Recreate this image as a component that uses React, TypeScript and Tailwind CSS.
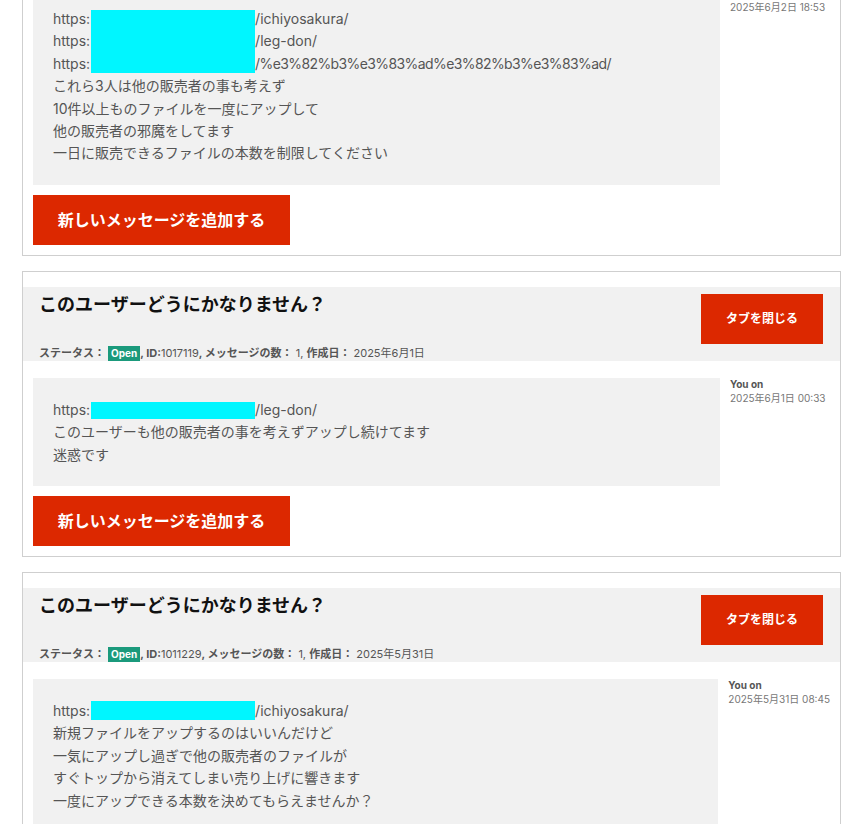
import React from "react";

const FONT = { fontFamily: "Inter, 'Noto Sans CJK JP', sans-serif" };

function Cyan({ cls }: { cls: string }) {
  return <span className={`ml-[1px] inline-block w-[164px] bg-[#00f6ff] ${cls}`} />;
}

type Line = React.ReactNode;

function Card({
  first,
  title,
  id,
  created,
  when,
  lines,
}: {
  first?: boolean;
  title: string;
  id: string;
  created: string;
  when: string;
  lines: Line[];
}) {
  return (
    <div
      className={`ml-[22px] w-[819px] border border-[#cfcfcf] bg-white pt-[15px] ${
        first ? "-mt-[120px]" : "mt-[15px]"
      }`}
    >
      <div className="flex h-[74px] justify-between bg-[#f1f1f1]">
        <div className="flex flex-col pl-[16px]">
          <div className="pt-[6px] text-[18px] font-bold leading-[24px] text-[#111]">{title}</div>
          <div className="mt-auto pb-[0px] text-[11px] leading-[16px] text-[#555]">
            <span className="font-bold">ステータス：</span>{" "}
            <span className="inline-block bg-[#1b9a7c] px-[3px] text-[10px] font-bold leading-[15px] text-white">
              Open
            </span>
            <span className="font-bold">, ID:</span>
            {id}
            <span className="font-bold">, メッセージの数：</span> 1,{" "}
            <span className="font-bold">作成日：</span> {created}
          </div>
        </div>
        <button className="mr-[17px] mt-[7px] h-[50px] w-[122px] bg-[#dc2800] text-[12px] font-bold text-white">
          タブを閉じる
        </button>
      </div>
      <div className="px-[10px] pb-[10px] pt-[17px]">
        <div className="flex">
          <div className="w-[687px] bg-[#f1f1f1] px-5 pb-[20px] pt-[21px] text-[14px] leading-[22.4px] text-[#555]">
            {lines.map((l, i) => (
              <div key={i}>{l}</div>
            ))}
          </div>
          <div className="-mt-[1px] ml-[10px] whitespace-nowrap text-[10px] leading-[14px]">
            <div className="font-bold text-[#555]">You on</div>
            <div className="text-[#777]">{when}</div>
          </div>
        </div>
        <button className="mt-[10px] h-[50px] w-[257px] bg-[#dc2800] text-[16px] font-bold text-white">
          新しいメッセージを追加する
        </button>
      </div>
    </div>
  );
}

export default function App() {
  return (
    <div className="min-h-screen overflow-hidden bg-white pb-10" style={FONT}>
      <Card
        first
        title="このユーザーどうにかなりません？"
        id="1017320"
        created="2025年6月2日"
        when="2025年6月2日 18:53"
        lines={[
          <>
            https:<Cyan cls="h-[20px] align-bottom" />/ichiyosakura/
          </>,
          <>
            https:<Cyan cls="h-[22.4px] align-top" />/leg-don/
          </>,
          <>
            https:<Cyan cls="h-[20px] align-top" />
            <span className="tracking-[-0.6px]">/%e3%82%b3%e3%83%ad%e3%82%b3%e3%83%ad/</span>
          </>,
          "これら3人は他の販売者の事も考えず",
          "10件以上ものファイルを一度にアップして",
          "他の販売者の邪魔をしてます",
          "一日に販売できるファイルの本数を制限してください",
        ]}
      />
      <Card
        title="このユーザーどうにかなりません？"
        id="1017119"
        created="2025年6月1日"
        when="2025年6月1日 00:33"
        lines={[
          <>
            https:<Cyan cls="h-[17px] align-[-4px]" />/leg-don/
          </>,
          "このユーザーも他の販売者の事を考えずアップし続けてます",
          "迷惑です",
        ]}
      />
      <Card
        title="このユーザーどうにかなりません？"
        id="1011229"
        created="2025年5月31日"
        when="2025年5月31日 08:45"
        lines={[
          <>
            https:<Cyan cls="h-[19px] align-[-4px]" />/ichiyosakura/
          </>,
          "新規ファイルをアップするのはいいんだけど",
          "一気にアップし過ぎで他の販売者のファイルが",
          "すぐトップから消えてしまい売り上げに響きます",
          "一度にアップできる本数を決めてもらえませんか？",
        ]}
      />
    </div>
  );
}
